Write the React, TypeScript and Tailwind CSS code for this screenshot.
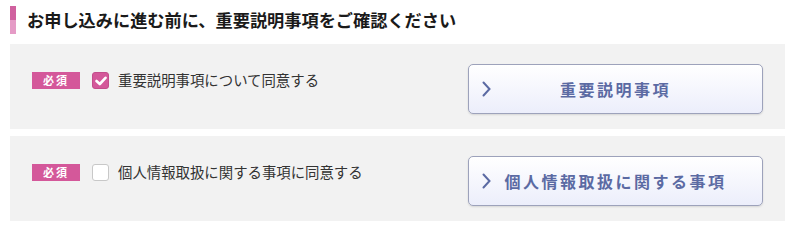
const FONT = { fontFamily: '"Noto Sans CJK JP", "Noto Sans", sans-serif' };

function Chevron() {
  return (
    <svg width="9" height="16" viewBox="0 0 9 16" className="absolute left-[13px] top-1/2 -translate-y-1/2">
      <path d="M1.5 1.5 L7.5 8 L1.5 14.5" fill="none" stroke="#5b6aa3" strokeWidth="2" strokeLinecap="round" />
    </svg>
  );
}

function Row({ label, button, checked }: { label: string; button: string; checked: boolean }) {
  return (
    <div className="bg-[#f2f2f2] flex items-start justify-between pl-[22px] pr-[22px] pt-[20px] pb-[15px]">
      <div className="flex items-center pt-[8px]">
        <span className="w-[48px] h-[17px] bg-[#d4589a] text-white text-[11px] font-bold tracking-[2px] flex items-center justify-center leading-none">
          必須
        </span>
        <span
          className={`ml-[12px] w-[17px] h-[17px] rounded-[3px] flex items-center justify-center ${
            checked ? 'bg-[#d4589a] border border-[#c44d8c]' : 'bg-white border border-[#c8c8c8]'
          }`}
        >
          {checked && (
            <svg width="12" height="10" viewBox="0 0 12 10">
              <path d="M1.5 5 L4.8 8 L10.5 1.8" fill="none" stroke="#fff" strokeWidth="2.6" strokeLinecap="round" strokeLinejoin="round" />
            </svg>
          )}
        </span>
        <span className="ml-[9px] text-[14.4px] text-[#333] leading-none">{label}</span>
      </div>
      <button className="relative w-[295px] h-[50px] rounded-[5px] border border-[#9da2bb] bg-gradient-to-b from-white to-[#eceefb] shadow-[0_1px_2px_rgba(0,0,0,0.12)] flex items-center justify-center">
        <Chevron />
        <span className="text-[16px] font-bold tracking-[2.5px] text-[#5b6aa3] leading-none">{button}</span>
      </button>
    </div>
  );
}

export default function App() {
  return (
    <div className="w-[800px] h-[234px] bg-white pl-[10px] pr-[15px]" style={FONT}>
      <div className="flex items-center h-[44px] pb-[4px]">
        <div className="w-[6px] h-[28px] flex flex-col">
          <div className="flex-1 bg-[#d0619f]" />
          <div className="flex-1 bg-[#e59bc6]" />
        </div>
        <h1 className="ml-[11px] text-[17.2px] font-bold text-[#1a1a1a] leading-none">
          お申し込みに進む前に、重要説明事項をご確認ください
        </h1>
      </div>
      <div className="flex flex-col gap-[7px]">
        <Row label="重要説明事項について同意する" button="重要説明事項" checked />
        <Row label="個人情報取扱に関する事項に同意する" button="個人情報取扱に関する事項" checked={false} />
      </div>
    </div>
  );
}
